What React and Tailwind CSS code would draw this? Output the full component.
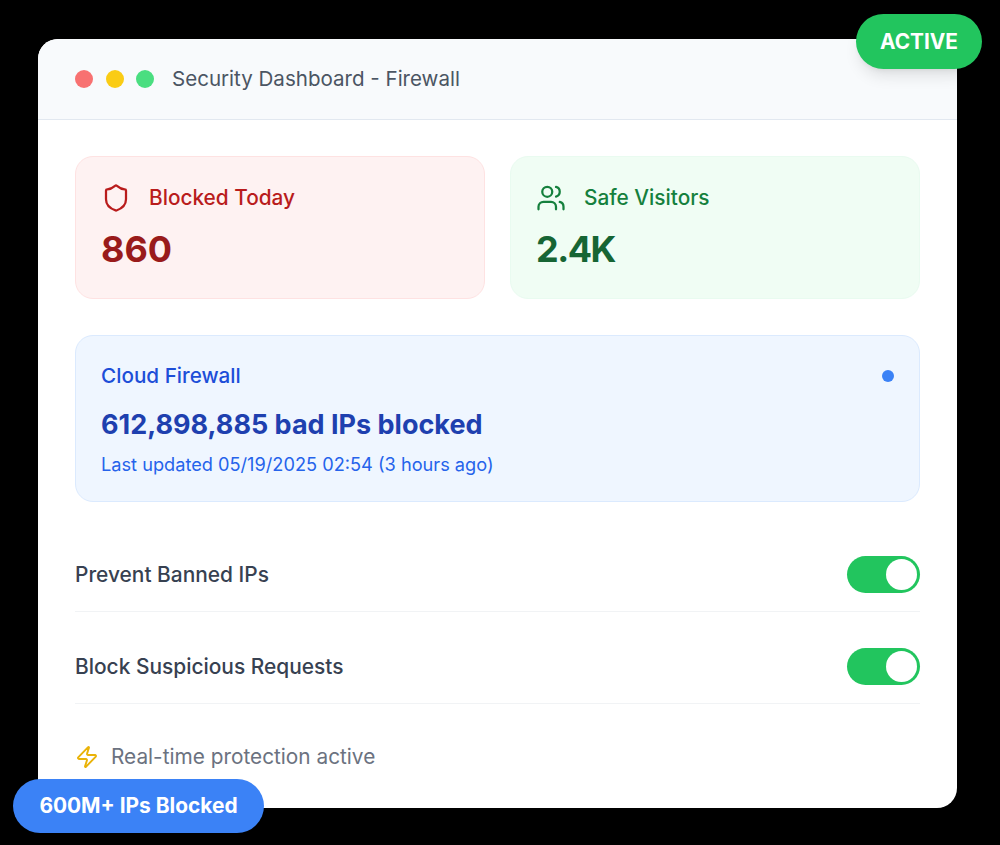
import { Shield, Users, Zap } from 'lucide-react';

function StatCard({ icon: Icon, label, value, box, iconColor, labelColor, valueColor }) {
  return (
    <div className={`flex-1 h-[143px] rounded-[18px] border px-[25px] pt-[24px] ${box}`}>
      <div className="flex items-center h-[34px]">
        <Icon className={`w-[30px] h-[30px] ${iconColor}`} strokeWidth={1.8} />
        <span className={`ml-[18px] text-[20.8px] font-medium ${labelColor}`}>{label}</span>
      </div>
      <div className={`mt-[10px] text-[36px] leading-[48px] font-bold ${valueColor}`}>{value}</div>
    </div>
  );
}

function ToggleRow({ label }) {
  return (
    <div className="flex items-center justify-between pb-[18px] border-b border-[#f1f3f5]">
      <span className="text-[20.9px] font-medium text-[#374151]">{label}</span>
      <div className="flex items-center justify-end w-[73px] h-[37px] rounded-full bg-[#22c55e] pr-[3px]">
        <div className="w-[31px] h-[31px] rounded-full bg-white" />
      </div>
    </div>
  );
}

export default function App() {
  return (
    <div className="w-[1000px] h-[845px] bg-black pt-[39px] pl-[38px] font-['Inter',sans-serif]">
      <div className="relative w-[919px] h-[769px] rounded-[20px] bg-white">
        <div className="flex items-center h-[81px] rounded-t-[20px] bg-[#f8fafc] border-b border-[#e2e8f0] pl-[37px]">
          <div className="flex gap-[12.5px]">
            <div className="w-[18px] h-[18px] rounded-full bg-[#f87171]" />
            <div className="w-[18px] h-[18px] rounded-full bg-[#facc15]" />
            <div className="w-[18px] h-[18px] rounded-full bg-[#4ade80]" />
          </div>
          <span className="ml-[18px] text-[20.55px] font-normal text-[#4b5563]">Security Dashboard - Firewall</span>
        </div>

        <div className="px-[37px] pt-[36px]">
          <div className="flex gap-[25px]">
            <StatCard
              icon={Shield}
              label="Blocked Today"
              value="860"
              box="bg-[#fef2f2] border-[#fee2e2]"
              iconColor="text-[#b91c1c]"
              labelColor="text-[#b91c1c]"
              valueColor="text-[#991b1b]"
            />
            <StatCard
              icon={Users}
              label="Safe Visitors"
              value="2.4K"
              box="bg-[#f0fdf4] border-[#e9fbf0]"
              iconColor="text-[#15803d]"
              labelColor="text-[#15803d]"
              valueColor="text-[#166534] tracking-[-1.5px]"
            />
          </div>

          <div className="mt-[36px] h-[167px] rounded-[18px] border border-[#dbeafe] bg-[#eff6ff] px-[25px] pt-[25px]">
            <div className="flex items-center justify-between">
              <span className="text-[20.7px] leading-[30px] font-medium text-[#1d4ed8]">Cloud Firewall</span>
              <div className="w-[12px] h-[12px] rounded-full bg-[#3b82f6]" />
            </div>
            <div className="mt-[18px] text-[27px] leading-[32px] font-bold text-[#1e40af]">612,898,885 bad IPs blocked</div>
            <div className="mt-[10px] text-[18.2px] leading-[26px] text-[#2563eb]">Last updated 05/19/2025 02:54 (3 hours ago)</div>
          </div>

          <div className="mt-[54px] flex flex-col gap-[36px]">
            <ToggleRow label="Prevent Banned IPs" />
            <ToggleRow label="Block Suspicious Requests" />
          </div>

          <div className="mt-[40px] flex items-center h-[26px]">
            <Zap className="w-[24px] h-[24px] text-[#eab308]" strokeWidth={1.9} />
            <span className="ml-[12px] text-[20.8px] text-[#6b7280]">Real-time protection active</span>
          </div>
        </div>

        <div className="absolute -top-[25px] -right-[25px] flex items-center justify-center w-[126px] h-[55px] rounded-full bg-[#22c55e] shadow-lg text-[20.8px] font-bold text-white">
          ACTIVE
        </div>
        <div className="absolute -bottom-[25px] -left-[25px] flex items-center justify-center w-[251px] h-[54px] rounded-full bg-[#3b82f6] text-[20.9px] font-bold text-white">
          600M+ IPs Blocked
        </div>
      </div>
    </div>
  );
}
